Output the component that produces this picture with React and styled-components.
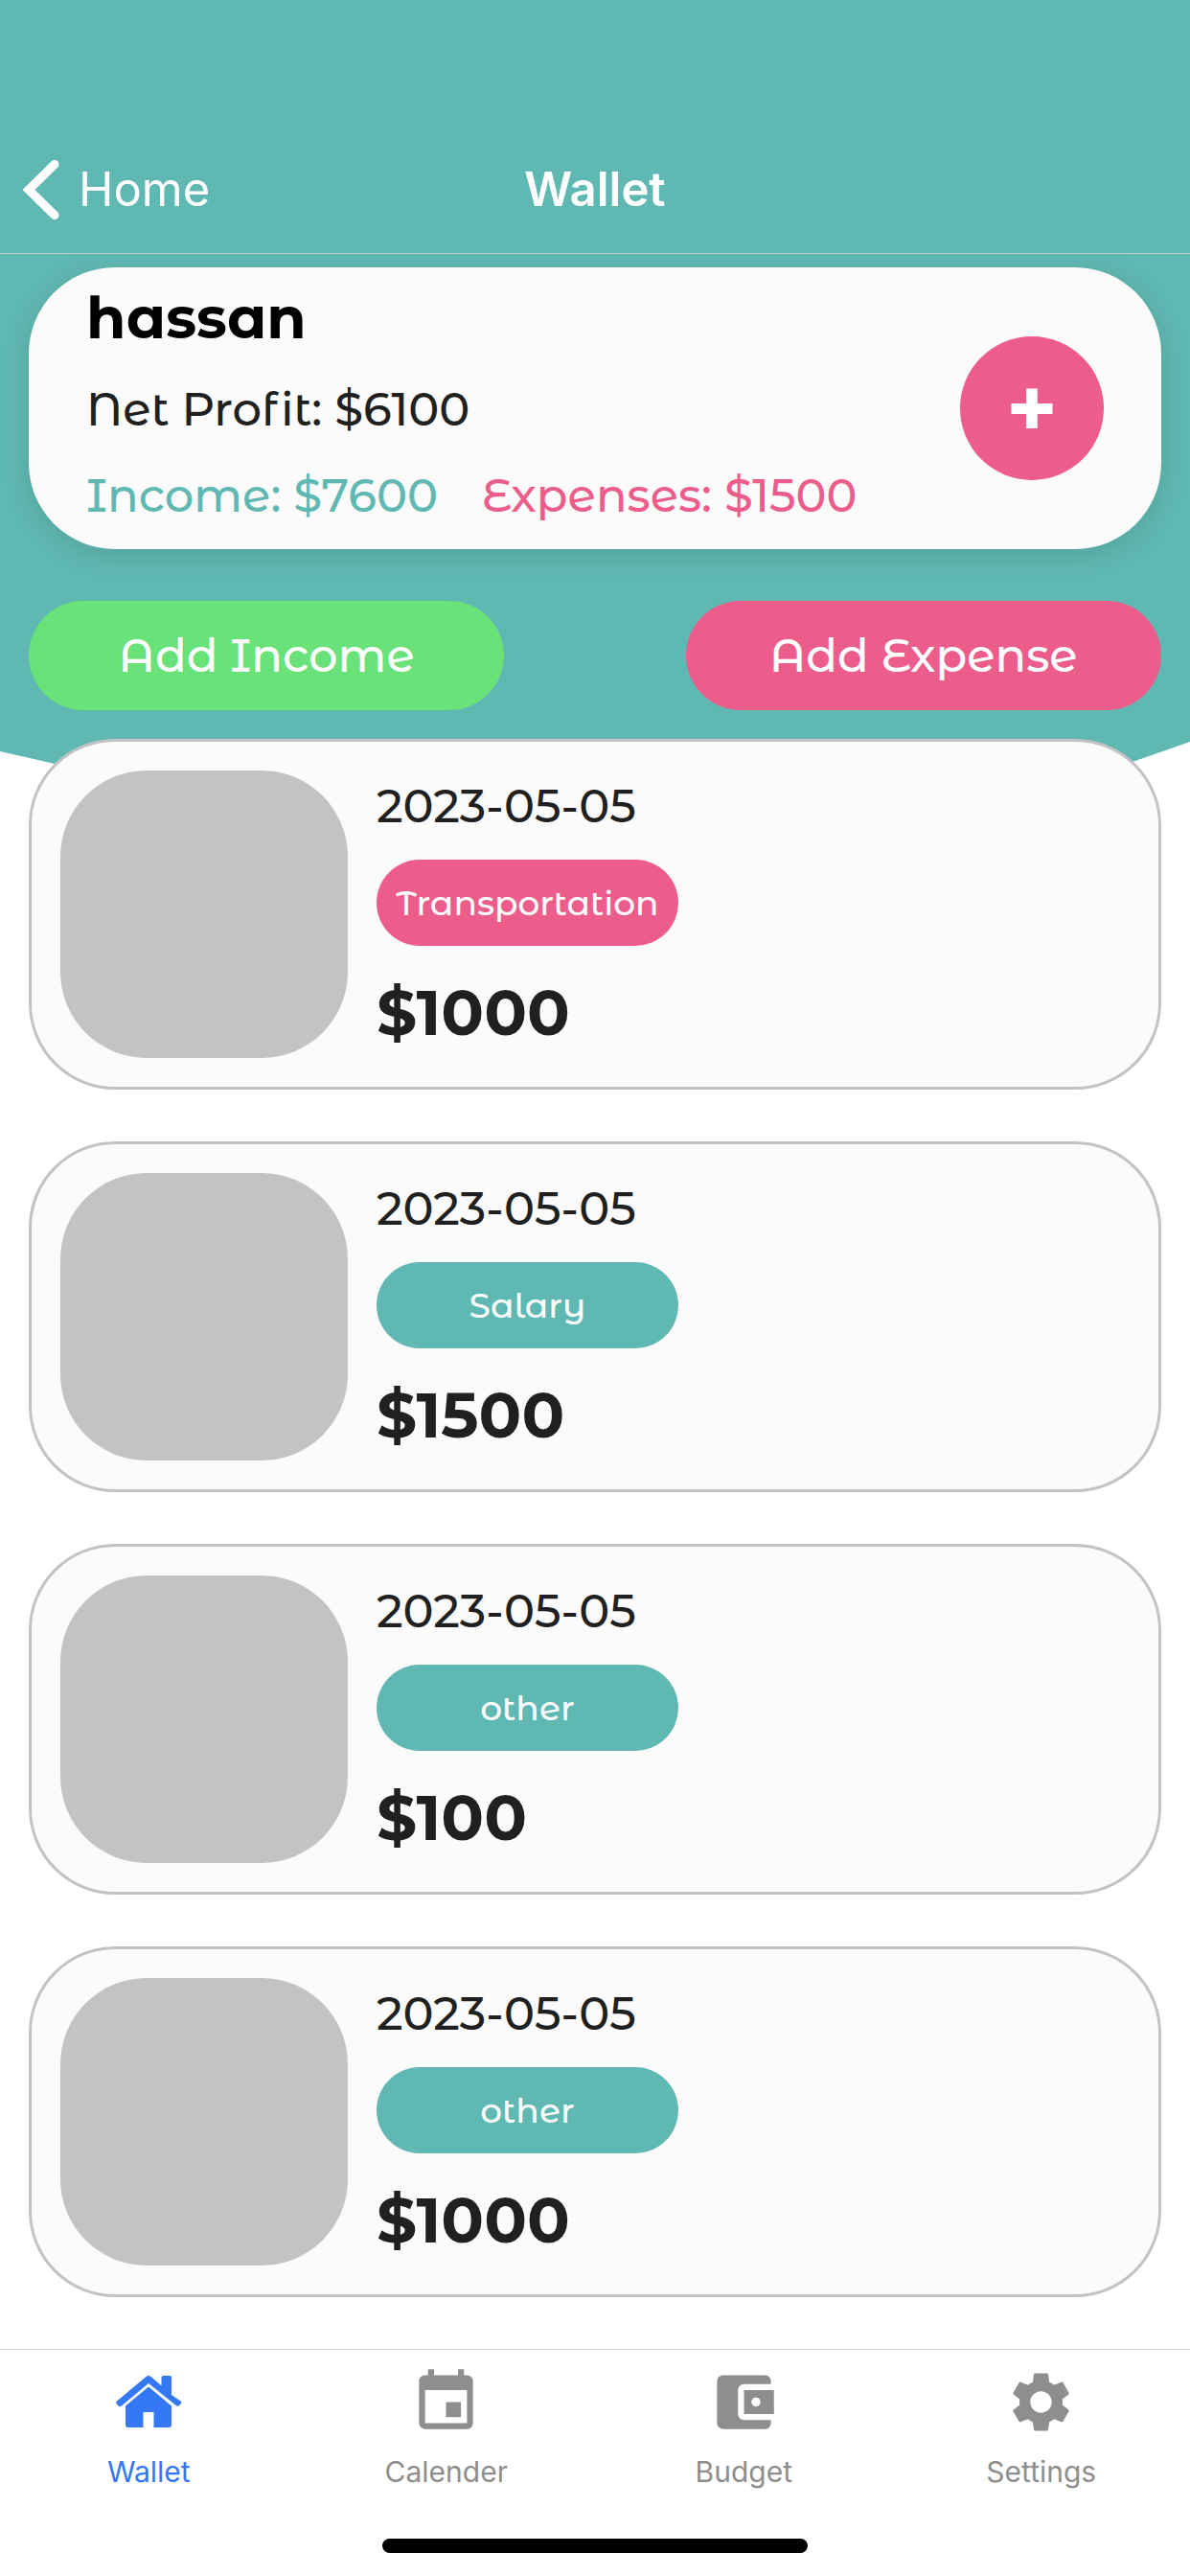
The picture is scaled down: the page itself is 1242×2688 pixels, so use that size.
import React from "react";
import styled, { createGlobalStyle } from "styled-components";
import { MdEvent, MdAccountBalanceWallet, MdSettings } from "react-icons/md";

const color = {
  teal: "#60b8b2",
  pink: "#ed5d8c",
  green: "#69e27a",
  ink: "#1f2120",
  grey: "#c2c3c5",
  paper: "#fbfbfb",
  tabGrey: "#8e8e8e",
  tabBlue: "#3478f6",
};

const brandFont = `"Montserrat Alternates", Montserrat, Inter, sans-serif`;
const systemFont = `Inter, "Liberation Sans", sans-serif`;

const GlobalStyle = createGlobalStyle`
  *, *::before, *::after { box-sizing: border-box; }
  body { margin: 0; background: #fff; }
  h1, h2, p, ul { margin: 0; padding: 0; }
  button { border: 0; padding: 0; cursor: pointer; }
`;

const Screen = styled.div`
  display: flex;
  flex-direction: column;
  min-height: 100vh;
  font-family: ${brandFont};
  font-weight: 500;
  color: ${color.ink};
`;

const NavBar = styled.header`
  display: grid;
  grid-template-columns: 1fr auto 1fr;
  align-items: center;
  padding: 132px 24px 0;
  height: 265px;
  background: ${color.teal};
  border-bottom: 1px solid #b9c9c7;
  font-family: ${systemFont};
  color: #fff;
`;

const BackLink = styled.a`
  display: flex;
  align-items: center;
  gap: 20px;
  color: inherit;
  text-decoration: none;
  font-size: 49px;
  line-height: 60px;
  font-weight: 400;
`;

const NavTitle = styled.h1`
  font-size: 49px;
  line-height: 60px;
  font-weight: 600;
`;

const Hero = styled.section`
  padding: 14px 30px 69px;
  background: ${color.teal};
  clip-path: polygon(
    0 0, 100% 0, 100% calc(100% - 36px), calc(100% - 60px) calc(100% - 15px),
    calc(100% - 120px) 100%, 120px 100%, 57px calc(100% - 13px), 0 calc(100% - 26px)
  );
`;

const Summary = styled.div`
  display: flex;
  align-items: center;
  justify-content: space-between;
  height: 294px;
  padding: 0 60px;
  border-radius: 90px;
  background: ${color.paper};
  box-shadow: 0 6px 30px rgba(0, 0, 0, 0.12);
`;

const SummaryText = styled.div`
  display: flex;
  flex-direction: column;
  gap: 24px;
  padding-bottom: 8px;
`;

const UserName = styled.h2`
  font-size: 60px;
  line-height: 76px;
  font-weight: 700;
  color: #000;
`;

const Totals = styled.div`
  display: flex;
  gap: 46px;
`;

const Figure = styled.p`
  font-size: 48px;
  line-height: 66px;
  color: ${(p) => p.$tone || color.ink};
`;

const AddButton = styled.button`
  width: 150px;
  height: 150px;
  border-radius: 50%;
  background: ${color.pink};
  color: #fff;
  font-family: ${brandFont};
  font-size: 90px;
  line-height: 90px;
  font-weight: 700;
`;

const Actions = styled.div`
  display: flex;
  justify-content: space-between;
  margin-top: 54px;
`;

const ActionButton = styled.button`
  width: 42%;
  height: 114px;
  border-radius: 57px;
  background: ${(p) => p.$tone};
  color: #fff;
  font-family: ${brandFont};
  font-size: 48px;
  line-height: 60px;
  font-weight: 500;
`;

const EntryList = styled.ul`
  position: relative;
  display: flex;
  flex-direction: column;
  gap: 54px;
  margin-top: -39px;
  padding: 0 30px 54px;
  list-style: none;
`;

const Entry = styled.li`
  display: flex;
  gap: 30px;
  padding: 30px;
  border: 3px solid ${color.grey};
  border-radius: 90px;
  background: ${color.paper};
`;

const Thumb = styled.div`
  width: 300px;
  height: 300px;
  border-radius: 90px;
  background: ${color.grey};
`;

const EntryBody = styled.div`
  display: flex;
  flex-direction: column;
  align-items: flex-start;
  justify-content: space-between;
  padding-top: 4px;
`;

const EntryDate = styled.time`
  font-size: 48px;
  line-height: 66px;
`;

const Tag = styled.span`
  width: 315px;
  border-radius: 45px;
  background: ${(p) => p.$tone};
  color: #fff;
  font-size: 36px;
  line-height: 90px;
  text-align: center;
`;

const Amount = styled.strong`
  font-size: 66px;
  line-height: 94px;
  font-weight: 700;
`;

const TabBar = styled.nav`
  margin-top: auto;
  height: 237px;
  display: flex;
  flex-direction: column;
  justify-content: space-between;
  align-items: center;
  padding: 17px 0 24px;
  background: #fff;
  border-top: 1px solid #d8d8d8;
  font-family: ${systemFont};
`;

const Tabs = styled.div`
  display: flex;
  width: 100%;
`;

const Tab = styled.a`
  flex: 1;
  display: flex;
  flex-direction: column;
  align-items: center;
  gap: 17px;
  color: ${(p) => (p.$active ? color.tabBlue : color.tabGrey)};
  font-size: 30px;
  line-height: 36px;
  font-weight: 400;
  text-decoration: none;

  svg { width: 75px; height: 75px; }
`;

const HomeIndicator = styled.div`
  width: 444px;
  height: 15px;
  border-radius: 8px;
  background: #000;
`;

const Chevron = () => (
  <svg width="38" height="62" viewBox="0 0 38 62" fill="none" aria-hidden="true">
    <path d="M33 4.500L6 31L33 57.500" stroke="#fff" strokeWidth="9" strokeLinecap="round" strokeLinejoin="miter" />
  </svg>
);

const HouseIcon = () => (
  <svg viewBox="0 0 75 75" fill="currentColor" aria-hidden="true">
    <path d="M37 21.500L61 41.500V61q0 3-3 3H42.500V48H31.500V64H16q-3 0-3-3V41.500z" />
    <path d="M34.500 11Q37 9 39.500 11L50.500 20.500V12q0-2 2-2h6.500q2 0 2 2v18l9.500 6.500q1.500 1 .5 2.500l-2 2q-1.500 1.500-3 .3L37 18L8.500 41.800q-1.500 1.200-3-.3l-2-2.500q-1-1.500.5-2.500z" />
  </svg>
);

const entries = [
  { id: 1, tag: "Transportation", amount: "$1000", tone: color.pink },
  { id: 2, tag: "Salary", amount: "$1500", tone: color.teal },
  { id: 3, tag: "other", amount: "$100", tone: color.teal },
  { id: 4, tag: "other", amount: "$1000", tone: color.teal },
];

const tabs = [
  { label: "Wallet", Icon: HouseIcon },
  { label: "Calender", Icon: MdEvent },
  { label: "Budget", Icon: MdAccountBalanceWallet },
  { label: "Settings", Icon: MdSettings },
];

export default function App() {
  return (
    <Screen>
      <GlobalStyle />
      <NavBar>
        <BackLink href="#home">
          <Chevron />
          Home
        </BackLink>
        <NavTitle>Wallet</NavTitle>
      </NavBar>
      <main>
        <Hero>
          <Summary>
            <SummaryText>
              <UserName>hassan</UserName>
              <Figure>Net Profit: $6100</Figure>
              <Totals>
                <Figure $tone={color.teal}>Income: $7600</Figure>
                <Figure $tone={color.pink}>Expenses: $1500</Figure>
              </Totals>
            </SummaryText>
            <AddButton type="button">+</AddButton>
          </Summary>
          <Actions>
            <ActionButton type="button" $tone={color.green}>Add Income</ActionButton>
            <ActionButton type="button" $tone={color.pink}>Add Expense</ActionButton>
          </Actions>
        </Hero>
        <EntryList>
          {entries.map((entry) => (
            <Entry key={entry.id}>
              <Thumb />
              <EntryBody>
                <EntryDate>2023-05-05</EntryDate>
                <Tag $tone={entry.tone}>{entry.tag}</Tag>
                <Amount>{entry.amount}</Amount>
              </EntryBody>
            </Entry>
          ))}
        </EntryList>
      </main>
      <TabBar>
        <Tabs>
          {tabs.map(({ label, Icon }, index) => (
            <Tab key={label} href={`#${label.toLowerCase()}`} $active={index === 0}>
              <Icon />
              {label}
            </Tab>
          ))}
        </Tabs>
        <HomeIndicator />
      </TabBar>
    </Screen>
  );
}
